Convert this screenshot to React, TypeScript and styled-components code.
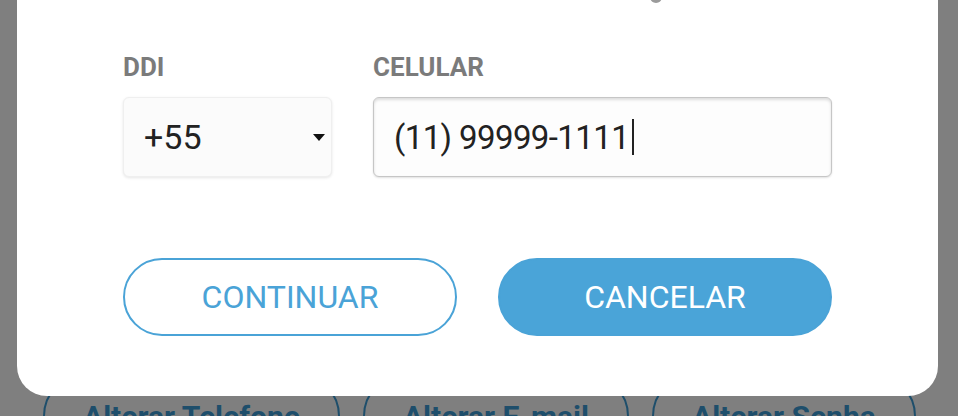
import React from "react";
import styled, { createGlobalStyle } from "styled-components";

const GlobalStyle = createGlobalStyle`
  html, body {
    margin: 0;
    padding: 0;
    background: #ffffff;
  }
  * { box-sizing: border-box; }
`;

const Screen = styled.div`
  position: relative;
  width: 958px;
  height: 416px;
  overflow: hidden;
  background: #ffffff;
  font-family: Roboto, "Liberation Sans", Arial, sans-serif;
`;

const ActionRow = styled.div`
  display: flex;
  gap: 23px;
  padding: 374px 0 0 43px;
`;

const OutlinePill = styled.div`
  display: flex;
  align-items: center;
  justify-content: center;
  height: 84px;
  padding: 0 38px;
  border: 2px solid #3d9dd6;
  border-radius: 42px;
  color: #3d9dd6;
  font-size: 30px;
  font-weight: 700;
  white-space: nowrap;
`;

const Backdrop = styled.div`
  position: absolute;
  inset: 0;
  background: rgba(0, 0, 0, 0.5);
`;

const Dialog = styled.div`
  position: absolute;
  top: 0;
  left: 17px;
  right: 20px;
  height: 396px;
  background: #ffffff;
  border-radius: 0 0 30px 30px;
  padding: 0 106px;
  display: flex;
  flex-direction: column;
`;

const TopHint = styled.div`
  display: flex;
  height: 52px;
`;

const HintDot = styled.span`
  display: block;
  width: 12px;
  height: 12px;
  margin: -9px 0 0 527px;
  border-radius: 50%;
  background: #9b9b9b;
`;

const FieldsRow = styled.div`
  display: grid;
  grid-template-columns: 209px 1fr;
  column-gap: 41px;
`;

const FieldGroup = styled.div`
  display: flex;
  flex-direction: column;
  gap: 15px;
`;

const Label = styled.label`
  font-size: 26px;
  line-height: 30px;
  font-weight: 700;
  color: #7b7b7b;
`;

const SelectBox = styled.div`
  display: flex;
  align-items: center;
  justify-content: space-between;
  height: 80px;
  padding: 0 6px 0 20px;
  background: #fbfbfb;
  border: 1px solid #efefef;
  border-radius: 6px;
  box-shadow: 0 1px 3px rgba(0, 0, 0, 0.1);
  color: #222222;
  font-size: 34px;
`;

const InputBox = styled.div`
  display: flex;
  align-items: center;
  height: 80px;
  padding: 0 0 0 20px;
  background: #fdfdfd;
  border: 1px solid #c6c6c6;
  border-radius: 6px;
  box-shadow: inset 0 2px 3px rgba(0, 0, 0, 0.13), 0 1px 2px rgba(0, 0, 0, 0.12);
  color: #222222;
  font-size: 33px;
  letter-spacing: -0.6px;
`;

const Caret = styled.span`
  display: inline-block;
  width: 2px;
  height: 36px;
  margin-left: 3px;
  background: #222222;
`;

const ButtonsRow = styled.div`
  display: grid;
  grid-template-columns: 1fr 1fr;
  column-gap: 41px;
  margin-top: 81px;
`;

const ActionButton = styled.button<{ $filled?: boolean }>`
  height: 78px;
  border-radius: 39px;
  border: 2px solid #4aa3d7;
  background: ${(p) => (p.$filled ? "#4aa4d8" : "#ffffff")};
  color: ${(p) => (p.$filled ? "#ffffff" : "#4aa3d7")};
  font-family: Roboto, "Liberation Sans", Arial, sans-serif;
  font-size: 32px;
  font-weight: 400;
  cursor: pointer;
`;

export default function App() {
  return (
    <>
      <GlobalStyle />
      <Screen>
        <ActionRow>
          <OutlinePill>Alterar Telefone</OutlinePill>
          <OutlinePill>Alterar E-mail</OutlinePill>
          <OutlinePill>Alterar Senha</OutlinePill>
        </ActionRow>
        <Backdrop>
          <Dialog>
            <TopHint>
              <HintDot />
            </TopHint>
            <FieldsRow>
              <FieldGroup>
                <Label>DDI</Label>
                <SelectBox>
                  <span>+55</span>
                  <svg width="12" height="7" viewBox="0 0 12 7">
                    <path d="M0 0 L12 0 L6 7 Z" fill="#111" />
                  </svg>
                </SelectBox>
              </FieldGroup>
              <FieldGroup>
                <Label>CELULAR</Label>
                <InputBox>
                  <span>(11) 99999-1111</span>
                  <Caret />
                </InputBox>
              </FieldGroup>
            </FieldsRow>
            <ButtonsRow>
              <ActionButton>CONTINUAR</ActionButton>
              <ActionButton $filled>CANCELAR</ActionButton>
            </ButtonsRow>
          </Dialog>
        </Backdrop>
      </Screen>
    </>
  );
}
